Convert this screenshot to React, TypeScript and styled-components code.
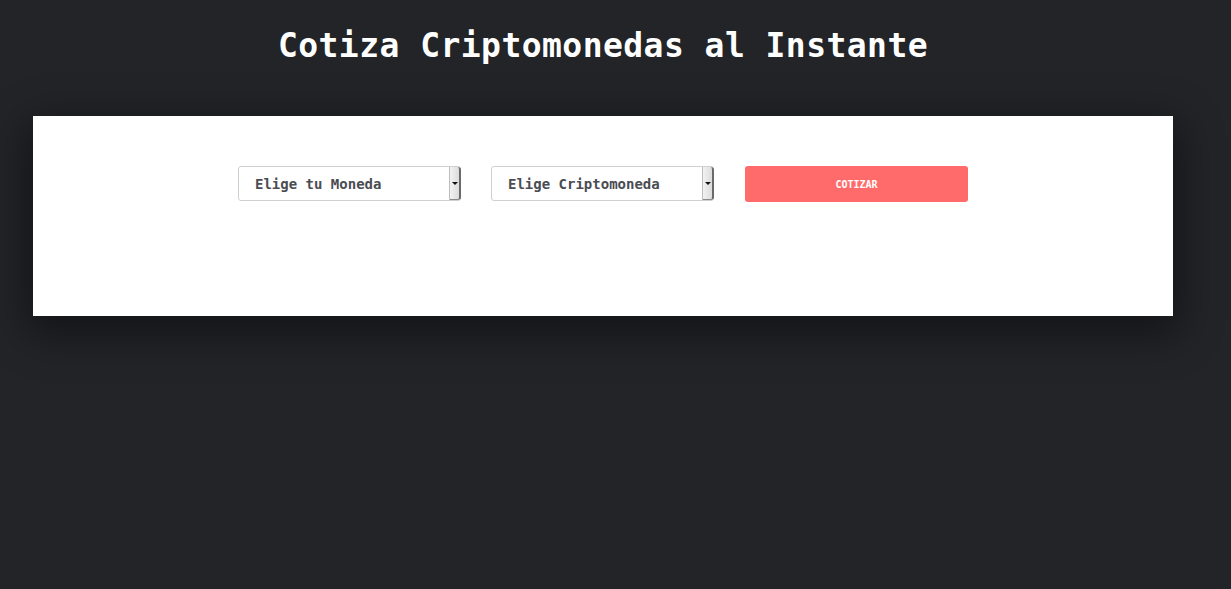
import React from "react";
import styled, { createGlobalStyle } from "styled-components";

const Global = createGlobalStyle`
  html, body { margin: 0; padding: 0; background: #232428; }
  body { font-family: "DejaVu Sans Mono", "Liberation Mono", monospace; }
  * { box-sizing: border-box; }
`;

const Page = styled.div`
  min-height: 589px;
  background: #232428;
  padding: 25px 58px 0 33px;
`;

const Title = styled.h1`
  margin: 0;
  color: #ffffff;
  font-family: "DejaVu Sans Mono", "Liberation Mono", monospace;
  font-size: 33px;
  font-weight: 700;
  text-align: center;
  line-height: 42px;
  letter-spacing: 0.45px;
`;

const Card = styled.div`
  margin-top: 49px;
  width: 1140px;
  height: 200px;
  background: #ffffff;
  box-shadow: 0 12px 40px 6px rgba(0, 0, 0, 0.45);
  padding-top: 50px;
`;

const Form = styled.form`
  display: flex;
  justify-content: center;
  gap: 30px;
`;

const SelectWrap = styled.div`
  position: relative;
  width: 223px;
  height: 35px;
`;

const Select = styled.select`
  appearance: none;
  width: 100%;
  height: 100%;
  border: 1px solid #cfd0d4;
  border-radius: 3px;
  background: #fff;
  padding: 0 0 0 16px;
  font-family: "DejaVu Sans Mono", "Liberation Mono", monospace;
  font-size: 14px;
  font-weight: 700;
  color: #4a4c52;
  outline: none;
`;

const Arrow = styled.span`
  position: absolute;
  top: 1px;
  right: 0;
  width: 12px;
  height: 33px;
  background: linear-gradient(to right, #f2f2f2, #dcdcdc);
  border-left: 1px solid #bdbdbd;
  border-right: 2px solid #6a6a6a;
  border-bottom: 1px solid #8a8a8a;
  border-radius: 0 3px 3px 0;
  display: flex;
  align-items: center;
  justify-content: center;
  pointer-events: none;
  &::after {
    content: "";
    border-left: 3px solid transparent;
    border-right: 3px solid transparent;
    border-top: 3px solid #111;
  }
`;

const Button = styled.button`
  width: 223px;
  height: 36px;
  margin-left: 1px;
  border: none;
  border-radius: 3px;
  background: #ff6b6b;
  color: #ffffff;
  font-family: "DejaVu Sans Mono", "Liberation Mono", monospace;
  font-size: 10px;
  font-weight: 700;
  text-transform: uppercase;
  cursor: pointer;
`;

export default function App() {
  return (
    <>
      <Global />
      <Page>
        <Title>Cotiza Criptomonedas al Instante</Title>
        <Card>
          <Form onSubmit={(e) => e.preventDefault()}>
            <SelectWrap>
              <Select defaultValue="">
                <option value="">Elige tu Moneda</option>
              </Select>
              <Arrow />
            </SelectWrap>
            <SelectWrap>
              <Select defaultValue="">
                <option value="">Elige Criptomoneda</option>
              </Select>
              <Arrow />
            </SelectWrap>
            <Button type="submit">Cotizar</Button>
          </Form>
        </Card>
      </Page>
    </>
  );
}
